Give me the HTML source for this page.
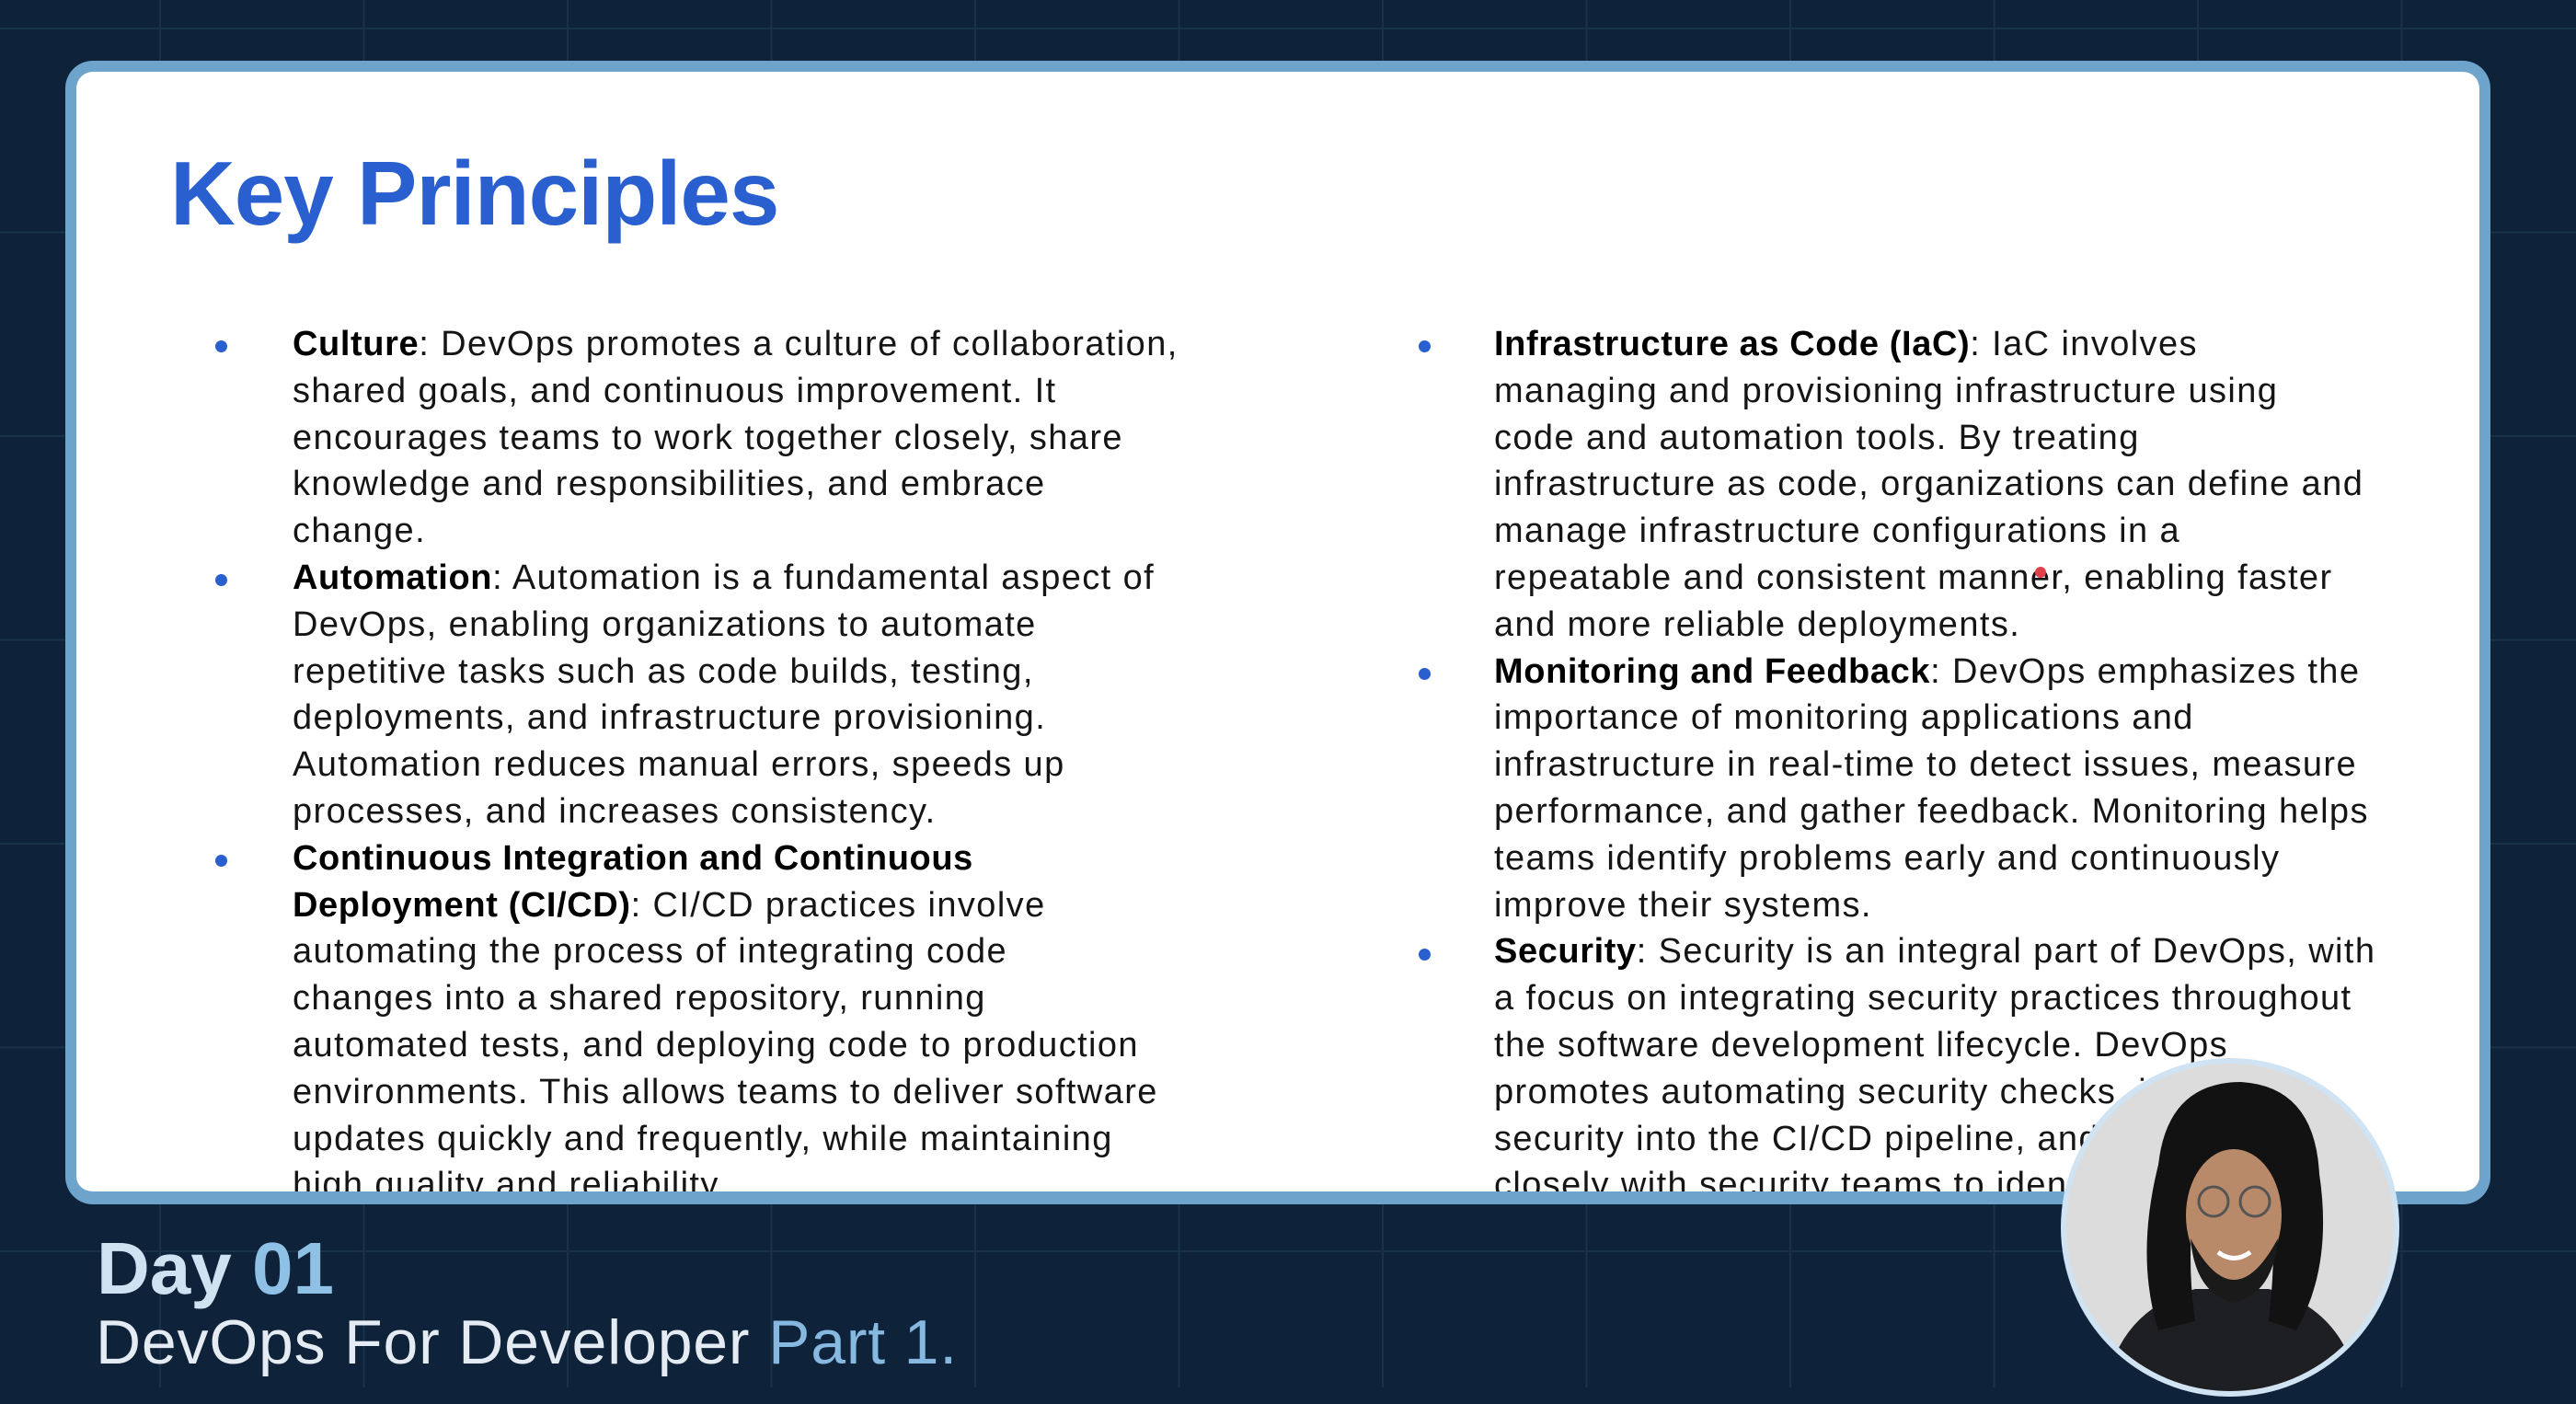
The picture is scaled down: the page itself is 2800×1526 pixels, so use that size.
<!DOCTYPE html>
<html><head><meta charset="utf-8"><style>
html,body{margin:0;padding:0}
body{width:2800px;height:1508px;background:#0e2239;position:relative;overflow:hidden;font-family:"Liberation Sans",sans-serif}
.grid{position:absolute;inset:0;background-image:linear-gradient(to right,#183249 2px,transparent 2px),linear-gradient(to bottom,#183249 2px,transparent 2px);background-size:221.5px 221.5px;background-position:173px 30px}
.card{position:absolute;left:71px;top:66px;width:2612px;height:1217px;border:12px solid #6ea4cb;border-bottom-width:14px;border-radius:30px;background:#fff;overflow:hidden}
.title{position:absolute;left:102px;top:76px;font-size:98px;font-weight:bold;color:#2a5fd0;letter-spacing:-1px}
.col{position:absolute;top:271px;font-size:38px;letter-spacing:1.4px;line-height:50.8px;color:#151515;white-space:nowrap}
.col b{color:#000;letter-spacing:0.6px}
.bul{position:absolute;width:13px;height:13px;border-radius:50%;background:#2a5fd0}
.foot1{position:absolute;left:105px;top:1333px;font-size:80px;font-weight:bold;color:#cfe2f2}
.foot1 span{color:#8fc0e6}
.foot2{position:absolute;left:104px;top:1420px;font-size:68px;color:#e4ebf2;letter-spacing:0.8px}
.foot2 span{color:#86b8e0}
</style></head><body>
<div class="grid"></div>
<div class="card">
<div class="title">Key Principles</div>
<div class="bul" style="left:151px;top:292px"></div>
<div class="bul" style="left:151px;top:546px"></div>
<div class="bul" style="left:151px;top:851px"></div>
<div class="bul" style="left:1459px;top:292px"></div>
<div class="bul" style="left:1459px;top:648px"></div>
<div class="bul" style="left:1459px;top:953px"></div>
<div class="col" style="left:235px">
<b>Culture</b>: DevOps promotes a culture of collaboration,<br>
shared goals, and continuous improvement. It<br>
encourages teams to work together closely, share<br>
knowledge and responsibilities, and embrace<br>
change.<br>
<b>Automation</b>: Automation is a fundamental aspect of<br>
DevOps, enabling organizations to automate<br>
repetitive tasks such as code builds, testing,<br>
deployments, and infrastructure provisioning.<br>
Automation reduces manual errors, speeds up<br>
processes, and increases consistency.<br>
<b>Continuous Integration and Continuous</b><br>
<b>Deployment (CI/CD)</b>: CI/CD practices involve<br>
automating the process of integrating code<br>
changes into a shared repository, running<br>
automated tests, and deploying code to production<br>
environments. This allows teams to deliver software<br>
updates quickly and frequently, while maintaining<br>
high quality and reliability.
</div>
<div class="col" style="left:1541px">
<b>Infrastructure as Code (IaC)</b>: IaC involves<br>
managing and provisioning infrastructure using<br>
code and automation tools. By treating<br>
infrastructure as code, organizations can define and<br>
manage infrastructure configurations in a<br>
repeatable and consistent manner, enabling faster<br>
and more reliable deployments.<br>
<b>Monitoring and Feedback</b>: DevOps emphasizes the<br>
importance of monitoring applications and<br>
infrastructure in real-time to detect issues, measure<br>
performance, and gather feedback. Monitoring helps<br>
teams identify problems early and continuously<br>
improve their systems.<br>
<b>Security</b>: Security is an integral part of DevOps, with<br>
a focus on integrating security practices throughout<br>
the software development lifecycle. DevOps<br>
promotes automating security checks, integrating<br>
security into the CI/CD pipeline, and collaborating<br>
closely with security teams to identify
</div>
<div style="position:absolute;left:2129px;top:538px;width:12px;height:12px;border-radius:50%;background:#e0404a"></div>
</div>
<div class="foot1">Day <span>01</span></div>
<div class="foot2">DevOps For Developer <span>Part 1.</span></div>
<svg style="position:absolute;left:2236px;top:1146px" width="380" height="380" viewBox="0 0 380 380">
<defs><clipPath id="c"><circle cx="188" cy="188" r="178"/></clipPath></defs>
<circle cx="188" cy="188" r="184" fill="#cfe3f3"/>
<g clip-path="url(#c)">
<rect width="380" height="380" fill="#dcdcdd"/>
<path d="M50 380 Q60 280 150 255 L230 255 Q320 280 330 380Z" fill="#1e1f22"/>
<path d="M110 120 Q120 30 200 30 Q280 35 285 130 Q300 230 260 300 L230 290 Q240 200 230 150 L150 150 Q140 220 150 290 L110 300 Q85 220 110 120Z" fill="#121212"/>
<ellipse cx="192" cy="175" rx="52" ry="72" fill="#b98a6a"/>
<path d="M145 200 Q192 290 240 200 Q235 260 192 270 Q150 260 145 200Z" fill="#1a1a1a"/>
<circle cx="170" cy="160" r="16" fill="none" stroke="#555" stroke-width="3"/>
<circle cx="215" cy="160" r="16" fill="none" stroke="#555" stroke-width="3"/>
<path d="M175 215 Q192 228 210 215" stroke="#fff" stroke-width="5" fill="none"/>
</g>
</svg>
</body></html>
